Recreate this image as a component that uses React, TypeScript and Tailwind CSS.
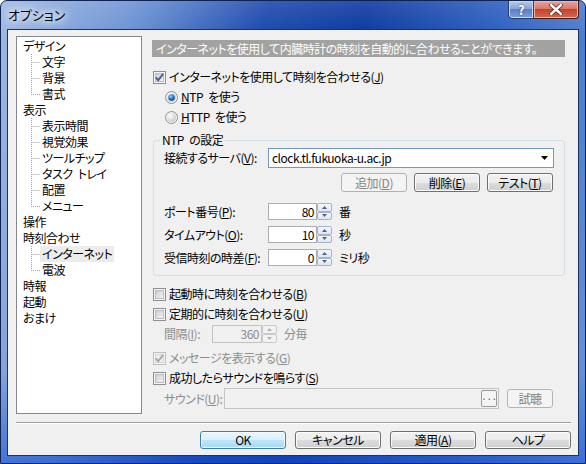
import React from "react";

type Node = { label: string; children?: string[] };

const tree: Node[] = [
  { label: "デザイン", children: ["文字", "背景", "書式"] },
  {
    label: "表示",
    children: ["表示時間", "視覚効果", "ツールチップ", "タスク トレイ", "配置", "メニュー"],
  },
  { label: "操作" },
  { label: "時刻合わせ", children: ["インターネット", "電波"] },
  { label: "時報" },
  { label: "起動" },
  { label: "おまけ" },
];

function CheckBox({ checked, disabled }: { checked?: boolean; disabled?: boolean }) {
  return (
    <svg width="13" height="13" viewBox="0 0 13 13" className="shrink-0">
      <defs>
        <linearGradient id="cbFill" x1="0" y1="0" x2="1" y2="1">
          <stop offset="0" stopColor="#c6cbd2" />
          <stop offset="1" stopColor="#f6f6f6" />
        </linearGradient>
      </defs>
      <rect x="0.5" y="0.5" width="12" height="12" fill="#f5f5f5" stroke={disabled ? "#bdbdbd" : "#8e8f8f"} />
      <rect x="2.5" y="2.5" width="8" height="8" fill={disabled ? "#ededed" : "url(#cbFill)"} stroke={disabled ? "#d6d6d6" : "#b9bec5"} />
      {checked && (
        <path
          d="M2.8 6.4 L5.2 9.2 L10.2 2.8"
          fill="none"
          stroke={disabled ? "#a9a9a9" : "#4a5f97"}
          strokeWidth="1.9"
        />
      )}
    </svg>
  );
}

function Radio({ checked }: { checked?: boolean }) {
  return (
    <svg width="13" height="13" viewBox="0 0 13 13" className="shrink-0">
      <defs>
        <radialGradient id="rdFill" cx="0.35" cy="0.3" r="0.75">
          <stop offset="0" stopColor="#ffffff" />
          <stop offset="1" stopColor="#c4c8cf" />
        </radialGradient>
        <radialGradient id="rdSel" cx="0.4" cy="0.35" r="0.65">
          <stop offset="0" stopColor="#9fdcff" />
          <stop offset="0.55" stopColor="#1d83d9" />
          <stop offset="1" stopColor="#0b3f86" />
        </radialGradient>
      </defs>
      <circle cx="6.5" cy="6.5" r="6" fill="#f3f3f3" stroke="#8e8f8f" />
      <circle cx="6.5" cy="6.5" r="4.6" fill="url(#rdFill)" />
      {checked && <circle cx="6.5" cy="6.5" r="3.2" fill="url(#rdSel)" />}
    </svg>
  );
}

function Btn({
  children,
  className = "",
  disabled,
  primary,
}: {
  children: React.ReactNode;
  className?: string;
  disabled?: boolean;
  primary?: boolean;
}) {
  const look = disabled
    ? "border-[#adb2b5] bg-[#f4f4f4] text-[#838383]"
    : primary
      ? "border-[#3c7fb1] bg-[linear-gradient(#eaf6fd_0%,#d9f0fc_50%,#bee6fd_50%,#a7d9f5_100%)] shadow-[inset_0_0_0_1px_#f4fbff]"
      : "border-[#707070] bg-[linear-gradient(#f2f2f2_0%,#ebebeb_50%,#dddddd_50%,#cfcfcf_100%)] shadow-[inset_0_0_0_1px_#fcfcfc]";
  return (
    <div className={`flex items-center justify-center whitespace-nowrap rounded-[3px] border ${look} ${className}`}>
      {children}
    </div>
  );
}

function SpinArrow({ up, disabled }: { up?: boolean; disabled?: boolean }) {
  return (
    <div
      className={`flex flex-1 items-center justify-center rounded-[2px] border ${
        disabled
          ? "border-[#c9c9c9] bg-[#f2f2f2]"
          : "border-[#a5b3c8] bg-[linear-gradient(#f5f8fc,#dde6f2)]"
      }`}
    >
      <svg width="5" height="3" viewBox="0 0 5 3">
        <path d={up ? "M0 3 L2.5 0 L5 3 Z" : "M0 0 L2.5 3 L5 0 Z"} fill={disabled ? "#b0b0b0" : "#4d6185"} />
      </svg>
    </div>
  );
}

function Spin({
  value,
  disabled,
  className = "",
  h = "h-[17px]",
}: {
  value: string;
  disabled?: boolean;
  className?: string;
  h?: string;
}) {
  return (
    <div className={`flex shrink-0 ${h}`}>
      <div
        className={`flex items-center justify-end border pr-[2px] ${className} ${
          disabled ? "border-[#c3c3c3] bg-[#f0f0f0] text-[#8d8d8d]" : "border-[#abadb3] bg-white"
        }`}
      >
        {value}
      </div>
      <div className="flex w-[15px] flex-col">
        <SpinArrow up disabled={disabled} />
        <SpinArrow disabled={disabled} />
      </div>
    </div>
  );
}

function Connector({ last }: { last?: boolean }) {
  return (
    <svg width="9" height="16" viewBox="0 0 9 16" className="shrink-0">
      <path
        d={last ? "M0.5 0 V8.5 H9" : "M0.5 0 V16 M0.5 8.5 H9"}
        fill="none"
        stroke="#a0a0a0"
        strokeDasharray="1 1"
      />
    </svg>
  );
}

function TitleBar() {
  return (
    <div className="flex h-[28px] items-start justify-between">
      <div className="pl-[7px] pt-[5px] text-[13px] leading-[18px] tracking-normal text-black [text-shadow:0_0_6px_#ffffff,0_0_10px_#ffffff,0_0_14px_#ffffff]">
        オプション
      </div>
      <div className="mr-[6px] flex -mt-px">
        <div className="flex h-[19px] w-[26px] items-center justify-center rounded-bl-[4px] border border-[#233b6d] bg-[linear-gradient(#b6c9e8_0%,#8aa7d8_45%,#5b7fc4_50%,#7d9fd9_100%)] shadow-[inset_0_0_0_1px_#c9d8f0]">
          <span className="text-[13px] font-bold leading-none text-white [text-shadow:0_0_2px_#1d2f55]">?</span>
        </div>
        <div className="flex h-[19px] w-[45px] items-center justify-center rounded-br-[4px] border border-l-0 border-[#4a1a14] bg-[linear-gradient(#e8a496_0%,#d9786a_45%,#c4432e_50%,#d36a4d_100%)] shadow-[inset_0_0_0_1px_#efb6aa]">
          <svg width="14" height="11" viewBox="0 0 14 11">
            <path d="M2 1 L12 10 M12 1 L2 10" stroke="#5a1d14" strokeWidth="4" strokeLinecap="round" />
            <path d="M2 1 L12 10 M12 1 L2 10" stroke="#ffffff" strokeWidth="2.4" strokeLinecap="round" />
          </svg>
        </div>
      </div>
    </div>
  );
}

function Tree() {
  return (
    <div className="h-[378px] w-[126px] shrink-0 border border-[#828790] bg-white pt-px">
      {tree.map((n) => (
        <div key={n.label}>
          <div className="h-[16px] whitespace-nowrap pl-[6px] leading-[16px]">{n.label}</div>
          {n.children?.map((c, i) => (
            <div key={c} className="flex h-[16px] whitespace-pre pl-[14px] leading-[16px]">
              <Connector last={i === n.children!.length - 1} />
              <span className={`px-[2px] ${c === "インターネット" ? "bg-[#ececec]" : ""}`}>{c}</span>
            </div>
          ))}
        </div>
      ))}
    </div>
  );
}

function CheckRow({
  children,
  checked,
  disabled,
  className = "",
}: {
  children: React.ReactNode;
  checked?: boolean;
  disabled?: boolean;
  className?: string;
}) {
  return (
    <div className={`flex h-[20px] items-center gap-[3px] whitespace-nowrap pl-px ${disabled ? "text-[#8d8d8d]" : ""} ${className}`}>
      <CheckBox checked={checked} disabled={disabled} />
      <span>{children}</span>
    </div>
  );
}

function RadioRow({ children, checked }: { children: React.ReactNode; checked?: boolean }) {
  return (
    <div className="flex h-[20px] items-center gap-[3px] whitespace-nowrap pl-[13px]">
      <Radio checked={checked} />
      <span>{children}</span>
    </div>
  );
}

function Panel() {
  return (
    <div className="ml-[10px] mt-[4px] flex w-[413px] flex-col whitespace-nowrap">
      <div className="h-[17px] bg-[#a2a2a2] pl-[4px] leading-[17px] text-white">
        インターネットを使用して内臓時計の時刻を自動的に合わせることができます。
      </div>
      <CheckRow checked className="mt-[10px]">
        インターネットを使用して時刻を合わせる(<u>J</u>)
      </CheckRow>
      <RadioRow checked>
        <u>N</u>TP を使う
      </RadioRow>
      <RadioRow>
        <u>H</u>TTP を使う
      </RadioRow>

      <fieldset className="ml-px mt-[6px] w-[412px] rounded-[3px] border border-[#d5dfe5] px-[10px] pb-[9px] pt-px">
        <legend className="-ml-[4px] px-[2px] leading-[14px]">NTP の設定</legend>
        <div className="flex h-[20px] items-center">
          <span className="w-[104px] shrink-0">
            接続するサーバ(<u>V</u>):
          </span>
          <div className="flex h-[20px] w-[286px] items-center justify-between border border-[#6f97c8] bg-white pl-[3px] pr-[5px]">
            <span>clock.tl.fukuoka-u.ac.jp</span>
            <svg width="7" height="4" viewBox="0 0 7 4">
              <path d="M0 0 H7 L3.5 4 Z" fill="#000" />
            </svg>
          </div>
        </div>
        <div className="mt-[5px] flex justify-end gap-[7px] pr-px">
          <Btn disabled className="h-[19px] w-[66px]">
            追加(<u>D</u>)
          </Btn>
          <Btn className="h-[19px] w-[66px]">
            削除(<u>E</u>)
          </Btn>
          <Btn className="h-[19px] w-[66px]">
            テスト(<u>T</u>)
          </Btn>
        </div>
        <div className="mt-[11px] flex h-[17px] items-center">
          <span className="w-[104px] shrink-0">
            ポート番号(<u>P</u>):
          </span>
          <Spin value="80" className="w-[49px]" />
          <span className="ml-[7px]">番</span>
        </div>
        <div className="mt-[6px] flex h-[17px] items-center">
          <span className="w-[104px] shrink-0">
            タイムアウト(<u>O</u>):
          </span>
          <Spin value="10" className="w-[49px]" />
          <span className="ml-[7px]">秒</span>
        </div>
        <div className="mt-[6px] flex h-[17px] items-center">
          <span className="w-[104px] shrink-0">
            受信時刻の時差(<u>F</u>):
          </span>
          <Spin value="0" className="w-[49px]" />
          <span className="ml-[7px]">ミリ秒</span>
        </div>
      </fieldset>

      <CheckRow className="mt-[8px]">
        起動時に時刻を合わせる(<u>B</u>)
      </CheckRow>
      <CheckRow>
        定期的に時刻を合わせる(<u>U</u>)
      </CheckRow>
      <div className="ml-[12px] mt-px flex h-[18px] items-center text-[#8d8d8d]">
        <span className="w-[48px] shrink-0">
          間隔(<u>I</u>):
        </span>
        <Spin value="360" disabled className="w-[50px]" h="h-[18px]" />
        <span className="ml-[7px]">分毎</span>
      </div>
      <CheckRow checked disabled className="mt-[5px]">
        メッセージを表示する(<u>G</u>)
      </CheckRow>
      <CheckRow>
        成功したらサウンドを鳴らす(<u>S</u>)
      </CheckRow>
      <div className="ml-[12px] flex h-[21px] items-center">
        <span className="w-[60px] shrink-0 text-[#8d8d8d]">
          サウンド(<u>U</u>):
        </span>
        <div className="flex h-[21px] w-[275px] shrink-0 items-center justify-end border border-[#c3c3c3] bg-[#f0f0f0] pr-px">
          <div className="flex h-[17px] w-[16px] items-center justify-center rounded-[2px] border border-[#9a9a9a] bg-[#f4f4f4] text-[10px] leading-none text-[#555]">
            ···
          </div>
        </div>
        <Btn disabled className="ml-[8px] h-[19px] w-[46px] border-[#b5b5b5] text-[#8d8d8d]">
          試聴
        </Btn>
      </div>
    </div>
  );
}

export default function App() {
  return (
    <div className="flex h-[464px] w-[586px] flex-col overflow-hidden rounded-t-[7px] border border-[#0f2250] bg-[linear-gradient(180deg,rgba(255,255,255,0.12)_0%,rgba(255,255,255,0)_8%,rgba(10,60,170,0)_80%,rgba(20,80,210,0.55)_100%),linear-gradient(100deg,#9fb8e2_0%,#6b92d4_20%,#1a47ad_40%,#0a379f_55%,#2b5dbe_75%,#6d97d9_100%)] font-['Noto_Sans_CJK_JP',sans-serif] text-[12px] leading-[16px] tracking-[-0.5px] text-black [font-feature-settings:'palt'] [word-spacing:3px]">
      <TitleBar />
      <div className="mx-[6px] mb-[7px] flex flex-1 flex-col border border-[#1b335e] bg-[#f0f0f0] pl-[8px] pr-[7px] pt-[6px]">
        <div className="flex">
          <Tree />
          <Panel />
        </div>
        <div className="mt-[8px] h-[2px] border-t border-b border-t-[#a0a0a0] border-b-white" />
        <div className="mt-[7px] flex justify-end gap-[9px]">
          <Btn primary className="h-[18px] w-[86px]">
            OK
          </Btn>
          <Btn className="h-[18px] w-[86px]">キャンセル</Btn>
          <Btn className="h-[18px] w-[86px]">
            適用(<u>A</u>)
          </Btn>
          <Btn className="h-[18px] w-[86px]">ヘルプ</Btn>
        </div>
      </div>
    </div>
  );
}
